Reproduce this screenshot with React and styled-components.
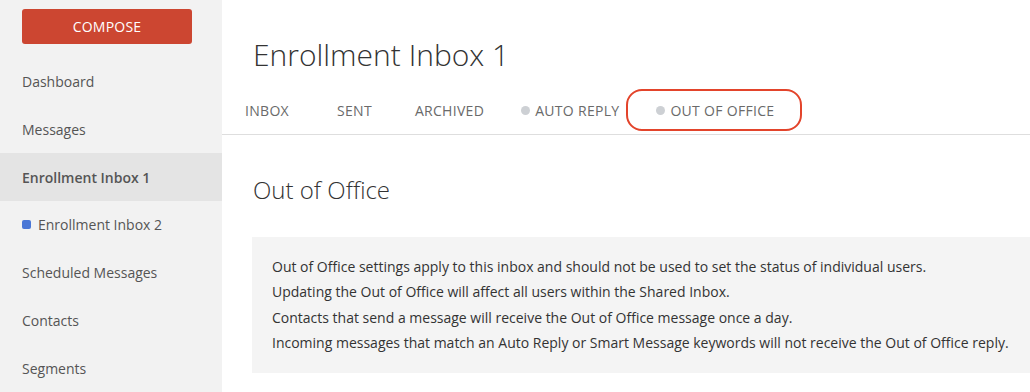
import React from 'react';
import styled, { createGlobalStyle } from 'styled-components';

const GlobalStyle = createGlobalStyle`
  html, body {
    margin: 0;
    padding: 0;
    background: #fff;
    font-family: "Open Sans", "Liberation Sans", sans-serif;
  }
`;

// Page frame
const Layout = styled.div`
  display: flex;
  height: 392px;
  overflow: hidden;
`;

const Sidebar = styled.nav`
  width: 222px;
  flex-shrink: 0;
  background-color: #f2f2f2;
  padding-top: 9px;
  display: flex;
  flex-direction: column;
`;

const ComposeButton = styled.button`
  margin: 0 0 14px 22px;
  width: 170px;
  height: 35px;
  border: none;
  border-radius: 3px;
  background-color: #cc4631;
  color: #fff;
  font-family: inherit;
  font-size: 14px;
  letter-spacing: 0.2px;
  cursor: pointer;
`;

const NavItem = styled.div`
  height: 48px;
  display: flex;
  align-items: center;
  gap: 7px;
  padding-left: 22px;
  font-size: 14px;
  color: #555;
  font-weight: ${(p) => (p.$active ? 600 : 400)};
  background-color: ${(p) => (p.$active ? '#e4e4e4' : 'transparent')};
`;

const ColorTag = styled.span`
  width: 9px;
  height: 9px;
  border-radius: 2px;
  background-color: ${(p) => p.$color};
`;

const Main = styled.main`
  flex: 1;
  min-width: 0;
`;

const Header = styled.header`
  padding-top: 35px;
  border-bottom: 1px solid #dedede;
`;

const Title = styled.h1`
  margin: 0 0 11px 31px;
  font-size: 30px;
  line-height: 40px;
  font-weight: 300;
  color: #333;
`;

const Tabs = styled.div`
  display: flex;
  height: 48px;
  padding-left: 1px;
`;

const Tab = styled.div`
  position: relative;
  display: flex;
  align-items: center;
  gap: 5px;
  margin-left: ${(p) => p.$offset}px;
  font-size: 14px;
  letter-spacing: 0.3px;
  color: #6a6a6a;
  text-transform: uppercase;

  ${(p) =>
    p.$highlight &&
    `
    &::after {
      content: '';
      position: absolute;
      left: -30px;
      right: -28px;
      top: 3px;
      bottom: 3px;
      border: 2px solid #e3442b;
      border-radius: 16px;
    }
  `}
`;

const Dot = styled.span`
  width: 9px;
  height: 9px;
  border-radius: 50%;
  background-color: #cdd0d4;
`;

const Content = styled.section`
  padding: 39px 0 0 30px;
`;

const SectionTitle = styled.h2`
  margin: 0 0 31px 1px;
  font-size: 24px;
  line-height: 32px;
  font-weight: 300;
  color: #333;
`;

const InfoBox = styled.div`
  margin-right: -40px;
  padding: 17px 20px;
  background-color: #f4f4f4;
`;

const InfoLine = styled.p`
  margin: 0;
  font-size: 14px;
  line-height: 25.4px;
  color: #333;
`;

const navItems = [
  { label: 'Dashboard' },
  { label: 'Messages' },
  { label: 'Enrollment Inbox 1', active: true },
  { label: 'Enrollment Inbox 2', tag: '#4a77d6' },
  { label: 'Scheduled Messages' },
  { label: 'Contacts' },
  { label: 'Segments' },
];

const tabs = [
  { label: 'Inbox', offset: 22 },
  { label: 'Sent', offset: 48 },
  { label: 'Archived', offset: 43 },
  { label: 'Auto Reply', offset: 37, dot: true },
  { label: 'Out of Office', offset: 37, dot: true, highlight: true },
];

const infoLines = [
  'Out of Office settings apply to this inbox and should not be used to set the status of individual users.',
  'Updating the Out of Office will affect all users within the Shared Inbox.',
  'Contacts that send a message will receive the Out of Office message once a day.',
  'Incoming messages that match an Auto Reply or Smart Message keywords will not receive the Out of Office reply.',
];

export default function App() {
  return (
    <>
      <GlobalStyle />
      <Layout>
        <Sidebar>
          <ComposeButton>COMPOSE</ComposeButton>
          {navItems.map((item) => (
            <NavItem key={item.label} $active={item.active}>
              {item.tag && <ColorTag $color={item.tag} />}
              {item.label}
            </NavItem>
          ))}
        </Sidebar>
        <Main>
          <Header>
            <Title>Enrollment Inbox 1</Title>
            <Tabs>
              {tabs.map((t) => (
                <Tab key={t.label} $offset={t.offset} $highlight={t.highlight}>
                  {t.dot && <Dot />}
                  {t.label}
                </Tab>
              ))}
            </Tabs>
          </Header>
          <Content>
            <SectionTitle>Out of Office</SectionTitle>
            <InfoBox>
              {infoLines.map((line) => (
                <InfoLine key={line}>{line}</InfoLine>
              ))}
            </InfoBox>
          </Content>
        </Main>
      </Layout>
    </>
  );
}
